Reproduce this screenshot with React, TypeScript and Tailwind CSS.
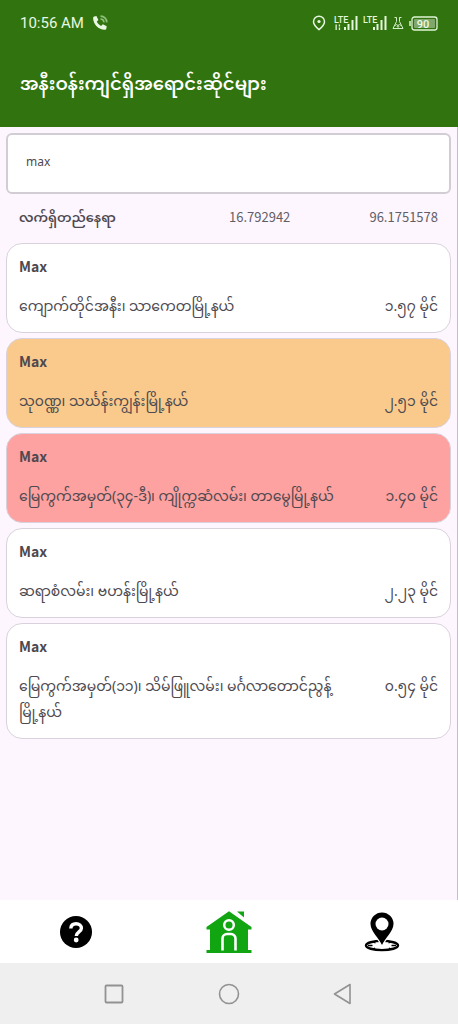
import React, { useState } from "react";

type Shop = { name: string; address: string; distance: string; tone: string };

const shops: Shop[] = [
  { name: "Max", address: "ကျောက်တိုင်အနီး၊ သာကေတမြို့နယ်", distance: "၁.၅၇ မိုင်", tone: "bg-white" },
  { name: "Max", address: "သု၀ဏ္ဏ၊ သင်္ဃန်းကျွန်းမြို့နယ်", distance: "၂.၅၁ မိုင်", tone: "bg-[#f9ca8c]" },
  { name: "Max", address: "မြေကွက်အမှတ်(၃၄-ဒီ)၊ ကျိုက္ကဆံလမ်း၊ တာမွေမြို့နယ်", distance: "၁.၄၀ မိုင်", tone: "bg-[#fda1a1]" },
  { name: "Max", address: "ဆရာစံလမ်း၊ ဗဟန်းမြို့နယ်", distance: "၂.၂၃ မိုင်", tone: "bg-white" },
  { name: "Max", address: "မြေကွက်အမှတ်(၁၁)၊ သိမ်ဖြူလမ်း၊ မင်္ဂလာတောင်ညွန့် မြို့နယ်", distance: "၀.၅၄ မိုင်", tone: "bg-white" },
];

function CallIcon() {
  return (
    <svg width="16" height="16" viewBox="0 0 16 16" fill="none" aria-hidden="true">
      <path d="M2.2 1.4 4.4 1l2 4-1.6 1.6c.9 2 2.2 3.3 4.3 4.3l1.7-1.7 3.9 2-.4 2.6c-.2.7-.8 1-1.6 1C6.500 14.600 1.200 9.200 1.100 2.900c0-.8.4-1.300 1.100-1.500Z" fill="#e9f7e2" />
      <path d="M8.500 1.200a6 6 0 0 1 6.200 6.200M8.500 4a3.300 3.300 0 0 1 3.400 3.400" stroke="#8fbf7c" strokeWidth="1.700" />
    </svg>
  );
}

function LocationIcon() {
  return (
    <svg className="mr-[3px]" width="14" height="16" viewBox="0 0 14 16" fill="none" aria-hidden="true">
      <path d="M7 1.200a5.500 5.500 0 0 0-5.500 5.500C1.500 9.800 4.500 12.500 7 14.600c2.500-2.100 5.500-4.800 5.500-7.900A5.500 5.500 0 0 0 7 1.200Z" stroke="#e9f7e2" strokeWidth="1.500" />
      <circle cx="7" cy="6.500" r="1.600" fill="#e9f7e2" />
    </svg>
  );
}

function SignalIcon({ sim }: { sim?: boolean }) {
  return (
    <svg width="24" height="16" viewBox="0 0 24 16" fill="#e4f6dc" aria-hidden="true">
      <text x="0" y="7.500" fontSize="9" fontWeight="500" fontFamily="Roboto, sans-serif">LTE</text>
      {sim && <path d="M1.500 9.500h1.300V15H1.500zM4.800 9.500h1.300v2H4.800zM4.800 12.500h1.300V15H4.800z" />}
      <path d="M10 12h2v3h-2zM13.500 9h2v6h-2zM17.500 5h2v10h-2zM21.500 1h2v14h-2z" />
    </svg>
  );
}

function FlaskIcon() {
  return (
    <svg width="12" height="14" viewBox="0 0 12 14" fill="none" stroke="#d3ecc8" strokeWidth="1" aria-hidden="true">
      <path d="M2.500 1.500h2.200M7.300 1.500h2.200M4.500 1.500v4L1 12.500h10l-3.500-7v-4M3 9.500l1.500-1 1.500 1 1.500-1 1.500 1" />
      <circle cx="6" cy="10.500" r=".8" />
    </svg>
  );
}

function BatteryIcon() {
  return (
    <svg width="29" height="15" viewBox="0 0 29 15" aria-hidden="true">
      <path d="M1 5v5" stroke="#dff3d6" strokeWidth="1.500" />
      <rect x="3" y="1" width="25" height="13" rx="2.500" fill="none" stroke="#dff3d6" strokeWidth="1.300" />
      <rect x="5" y="3" width="21" height="9" rx="1" fill="#7fa76c" />
      <text x="14" y="11.500" fontSize="11" fontWeight="500" textAnchor="middle" fontFamily="Roboto, sans-serif" fill="#eefbe8">90</text>
    </svg>
  );
}

function HelpIcon() {
  return (
    <svg width="32" height="32" viewBox="0 0 32 32" fill="none" aria-hidden="true">
      <circle cx="16" cy="16" r="16" fill="#000" />
      <path d="M10.800 12.500c.2-2.900 2.300-4.700 5.300-4.700 3.100 0 5.300 1.800 5.300 4.500 0 3.500-5.100 3.700-5.100 7.600" stroke="#fff" strokeWidth="3.400" />
      <circle cx="16.200" cy="24" r="2.400" fill="#fff" />
    </svg>
  );
}

function HomeIcon() {
  return (
    <svg width="46" height="44" viewBox="0 0 46 44" fill="none" aria-hidden="true">
      <path d="M31 1.500h7v6Z" fill="#12a512" />
      <path d="M23 1.200 45.500 17v2.500H42V40h3.500v3H.5v-3H4V19.500H.5V17Z" fill="#12a512" />
      <circle cx="23" cy="15" r="4.800" stroke="#fff" strokeWidth="2.500" />
      <path d="M16.500 40.500V28.500a4.500 4.500 0 0 1 4.500-4.500h4a4.500 4.500 0 0 1 4.500 4.500v12" stroke="#fff" strokeWidth="2.600" />
    </svg>
  );
}

function MapPinIcon() {
  return (
    <svg width="36" height="40" viewBox="0 0 36 40" fill="none" aria-hidden="true">
      <ellipse cx="18" cy="33.500" rx="16" ry="4.600" stroke="#000" strokeWidth="2.400" />
      <path d="M4 33.500h4.500M27.500 33.500H32M11 36.200l-2.500 1M25 36.200l2.500 1M11.500 31 9 30M24.500 31l2.500-1" stroke="#000" strokeWidth="1.300" />
      <path d="M18 33C15.500 27 6.500 19 6.500 12a11.500 11.500 0 0 1 23 0c0 7-9 15-11.500 21Z" fill="#000" stroke="#fff" strokeWidth="2.500" paintOrder="stroke" />
      <circle cx="18" cy="12" r="6.500" fill="#fff" />
    </svg>
  );
}

function ShopCard({ shop }: { shop: Shop }) {
  return (
    <li className={`rounded-2xl border border-[#d9d2dc] px-3 pt-[10px] pb-[13px] ${shop.tone}`}>
      <h2 className="font-['Noto_Sans_CJK_SC','Noto_Sans',sans-serif] text-sm leading-6 font-bold text-[#4d494f]">{shop.name}</h2>
      <div className="mt-[15px] flex items-start justify-between gap-8 text-sm leading-[26px]">
        <p>{shop.address}</p>
        <p className="shrink-0">{shop.distance}</p>
      </div>
    </li>
  );
}

export default function App() {
  const [query, setQuery] = useState("max");
  return (
    <div className="flex min-h-screen flex-col bg-[#fdf6ff] font-['Noto_Sans','Noto_Sans_Myanmar',sans-serif] text-[#4d494f]">
      <header className="bg-[#31740f] text-white">
        <div className="flex h-[46px] items-center justify-between pr-5 pl-5 font-[Roboto,sans-serif] text-[15px] text-[#e9f7e2]">
          <div className="flex items-center gap-2">
            <span>10:56 AM</span>
            <CallIcon />
          </div>
          <div className="flex items-center gap-[5px]">
            <LocationIcon />
            <SignalIcon sim />
            <SignalIcon />
            <FlaskIcon />
            <BatteryIcon />
          </div>
        </div>
        <h1 className="flex h-[81px] items-center px-5 pb-2 text-lg font-semibold">အနီးဝန်းကျင်ရှိအရောင်းဆိုင်များ</h1>
      </header>

      <main className="flex-1 border-r border-[#c5bfc9] pt-[6px] pr-[6px] pl-[6px]">
        <input
          aria-label="Search shops"
          value={query}
          onChange={(e) => setQuery(e.target.value)}
          className="block h-[61px] w-full rounded-md border-2 border-[#d2cdd4] bg-white px-[18px] pb-1 text-xs text-[#4d494f] outline-none"
        />
        <div className="flex h-[49px] items-center justify-between px-[13px] pb-1 font-['Noto_Sans_CJK_SC','Noto_Sans_Myanmar',sans-serif] text-[13px] text-[#625e65]">
          <span className="w-[198px] font-semibold text-[#4d494f]">လက်ရှိတည်နေရာ</span>
          <span className="flex-1 pl-3">16.792942</span>
          <span>96.1751578</span>
        </div>
        <ul className="flex flex-col gap-[5px]">
          {shops.map((shop) => (
            <ShopCard key={shop.address} shop={shop} />
          ))}
        </ul>
      </main>

      <nav aria-label="Main" className="grid h-[63px] grid-cols-3 bg-white">
        <button type="button" aria-label="Help" className="flex items-center justify-center"><HelpIcon /></button>
        <button type="button" aria-label="Home" className="flex items-center justify-center"><HomeIcon /></button>
        <button type="button" aria-label="Map" className="flex items-center justify-center"><MapPinIcon /></button>
      </nav>
      <footer className="grid h-[61px] grid-cols-3 bg-[#efefef] px-14 text-[#929292]">
        <button type="button" aria-label="Recent apps" className="flex items-center justify-center">
          <svg width="20" height="20" viewBox="0 0 20 20" fill="none" stroke="currentColor" strokeWidth="1.800" aria-hidden="true"><rect x="1.500" y="1.500" width="17" height="17" rx="1" /></svg>
        </button>
        <button type="button" aria-label="Home screen" className="flex items-center justify-center">
          <svg width="22" height="22" viewBox="0 0 22 22" fill="none" stroke="currentColor" strokeWidth="1.600" aria-hidden="true"><circle cx="11" cy="11" r="9.500" /></svg>
        </button>
        <button type="button" aria-label="Back" className="flex items-center justify-center">
          <svg width="22" height="22" viewBox="0 0 22 22" fill="none" stroke="currentColor" strokeWidth="1.600" strokeLinejoin="round" aria-hidden="true"><path d="M17 1.500v19L1.500 11Z" /></svg>
        </button>
      </footer>
    </div>
  );
}
